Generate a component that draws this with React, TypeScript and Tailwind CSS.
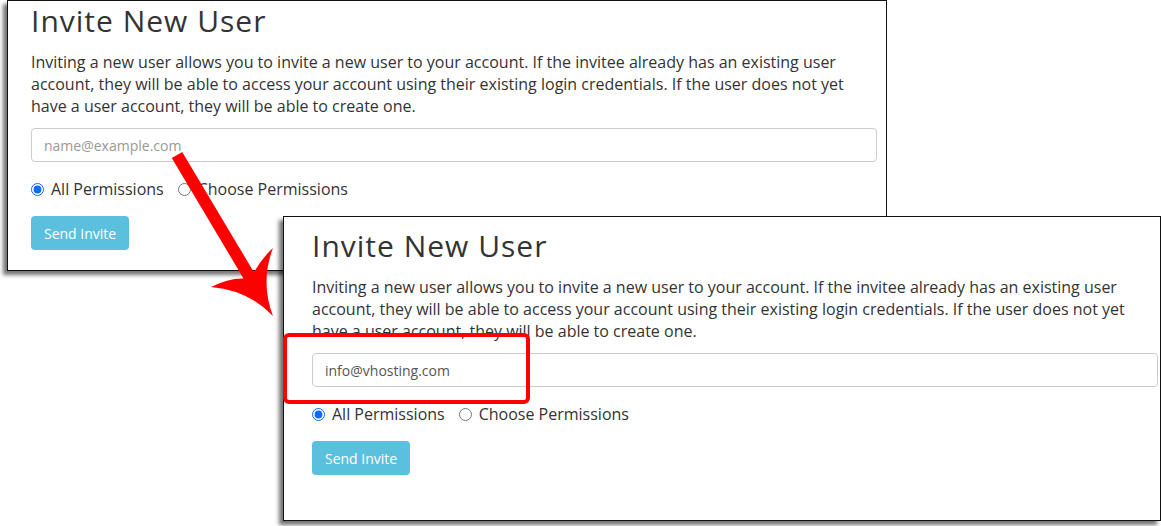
const bodyFont = { fontFamily: '"Open Sans", "Liberation Sans", sans-serif' };

function InviteCard({
  padTop,
  padLeft,
  email,
  name,
}: {
  padTop: string;
  padLeft: string;
  email?: string;
  name: string;
}) {
  return (
    <div className={`${padTop} ${padLeft}`} style={bodyFont}>
      <div className="w-[846px] text-[#333]">
        <h2 className="text-[30px] leading-[36px] tracking-[1px] font-normal text-[#333]">
          Invite New User
        </h2>
        <p className="mt-[12px] text-[16px] leading-[22px] text-[#333]">
          Inviting a new user allows you to invite a new user to your account. If the invitee already has an existing user
          <br />
          account, they will be able to access your account using their existing login credentials. If the user does not yet
          <br />
          have a user account, they will be able to create one.
        </p>
        <input
          type="text"
          readOnly
          value={email ?? ""}
          placeholder="name@example.com"
          className="mt-[11px] block w-full h-[34px] rounded-[4px] border border-[#ccc] bg-white px-3 text-[14px] text-[#555] placeholder:text-[#999] outline-none"
          style={bodyFont}
        />
        <div className="mt-[18px] flex items-center h-[18px] text-[16px]">
          <label className="flex items-center gap-[7px]">
            <input type="radio" name={name} defaultChecked className="w-[13px] h-[13px] accent-[#0a6cff]" />
            All Permissions
          </label>
          <label className="ml-[14px] flex items-center gap-[7px]">
            <input type="radio" name={name} className="w-[13px] h-[13px] accent-[#0a6cff]" />
            Choose Permissions
          </label>
        </div>
        <button className="mt-[18px] block h-[34px] px-[13px] rounded-[4px] bg-[#5bc0de] text-white text-[14px]" style={bodyFont}>
          Send Invite
        </button>
      </div>
    </div>
  );
}

export default function App() {
  return (
    <div className="relative w-[1161px] h-[526px] overflow-hidden bg-white">
      {/* first screenshot, cropped at the top */}
      <div className="absolute left-[7px] top-0 w-[880px] h-[271px] bg-white border border-[#111] shadow-[-4px_4px_4px_rgba(0,0,0,0.55)]">
        <InviteCard padTop="pt-[2px]" padLeft="pl-[23px]" name="perm1" />
      </div>

      {/* second screenshot, email filled */}
      <div className="absolute left-[283px] top-[216px] w-[878px] h-[305px] bg-white border border-[#111] shadow-[-4px_4px_4px_rgba(0,0,0,0.55)] overflow-hidden">
        <InviteCard padTop="pt-[11px]" padLeft="pl-[28px]" email="info@vhosting.com" name="perm2" />
      </div>

      {/* red arrow */}
      <svg className="absolute inset-0 w-full h-full pointer-events-none" viewBox="0 0 1161 526">
        <path
          d="M171.8 158.1 L182.2 151.9 L253.9 272.2 Q262 258 273 248 Q260 282 273 316 Q248 290 211 287 Q228 278 243.5 278.4 Z"
          fill="#ff0000"
        />
      </svg>

      {/* highlight box */}
      <div className="absolute left-[283px] top-[333px] w-[247px] h-[71px] rounded-[6px] border-[4px] border-[#ff0000]" />
    </div>
  );
}
